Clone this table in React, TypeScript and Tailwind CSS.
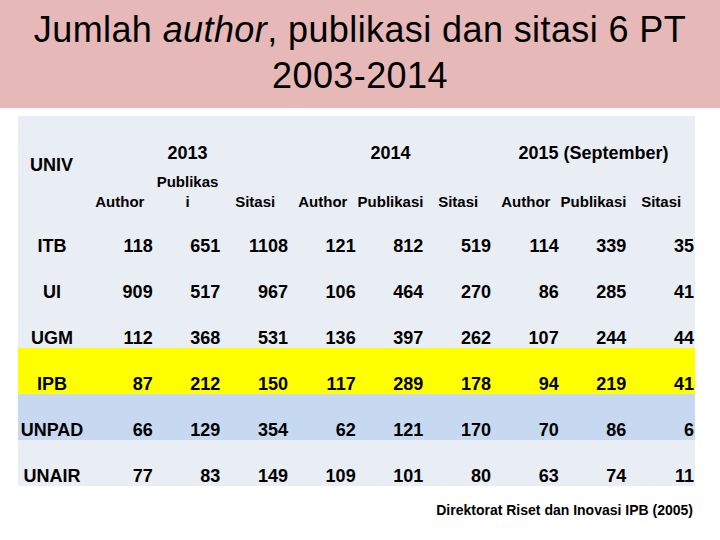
import React from 'react'

type Row = { univ: string, values: number[], bg: string }

const rows: Row[] = [
    { univ: "ITB", values: [118, 651, 1108, 121, 812, 519, 114, 339, 35], bg: "" },
    { univ: "UI", values: [909, 517, 967, 106, 464, 270, 86, 285, 41], bg: "" },
    { univ: "UGM", values: [112, 368, 531, 136, 397, 262, 107, 244, 44], bg: "" },
    { univ: "IPB", values: [87, 212, 150, 117, 289, 178, 94, 219, 41], bg: "bg-[#ffff00]" },
    { univ: "UNPAD", values: [66, 129, 354, 62, 121, 170, 70, 86, 6], bg: "bg-[#c6d9f0]" },
    { univ: "UNAIR", values: [77, 83, 149, 109, 101, 80, 63, 74, 11], bg: "bg-[#e9edf4]" },
]

const years = ["2013", "2014", "2015 (September)"]

const SubHead = ({ children }: { children: React.ReactNode }) => (
    <div className="flex items-end justify-center text-center text-[15px] leading-[20px]">
        <span className="-mb-0.5">{children}</span>
    </div>
)

const App = () => {
    return (
        <div className="w-[720px] h-[540px] bg-white text-black font-['Liberation_Sans',Arial,sans-serif]">
            <div className="h-[108px] bg-[#e6b8b7] pt-[7px] text-center text-[36px] leading-[46px] tracking-[0.4px]">
                Jumlah <i>author</i>, publikasi dan sitasi 6 PT
                <br />
                2003-2014
            </div>

            <div className="mt-2 ml-[18px] w-[677px] bg-[#e9edf4] font-bold">
                {/* header */}
                <div className="grid grid-cols-[68px_repeat(9,minmax(0,1fr))] grid-rows-[54px_40px]">
                    <div className="row-span-2 pl-3 pt-[38px] text-[18px] leading-[22px]">UNIV</div>
                    {years.map((y) => (
                        <div key={y} className="col-span-3 pt-[26px] text-center text-[18px] leading-[22px]">{y}</div>
                    ))}
                    <SubHead>Author</SubHead>
                    <SubHead>Publikas<br />i</SubHead>
                    <SubHead>Sitasi</SubHead>
                    <SubHead>Author</SubHead>
                    <SubHead>Publikasi</SubHead>
                    <SubHead>Sitasi</SubHead>
                    <SubHead>Author</SubHead>
                    <SubHead>Publikasi</SubHead>
                    <SubHead>Sitasi</SubHead>
                </div>

                {/* data rows */}
                {rows.map((r) => (
                    <div key={r.univ} className={`grid h-[46px] grid-cols-[68px_repeat(9,minmax(0,1fr))] items-end text-[18px] leading-[20px] ${r.bg}`}>
                        <div className="text-center">{r.univ}</div>
                        {r.values.map((v, i) => (
                            <div key={i} className="pr-px text-right">{v}</div>
                        ))}
                    </div>
                ))}
            </div>

            <p className="mt-4 pr-[27px] text-right text-[14px] font-bold leading-[16px]">
                Direktorat Riset dan Inovasi IPB (2005)
            </p>
        </div>
    )
}

export default App
